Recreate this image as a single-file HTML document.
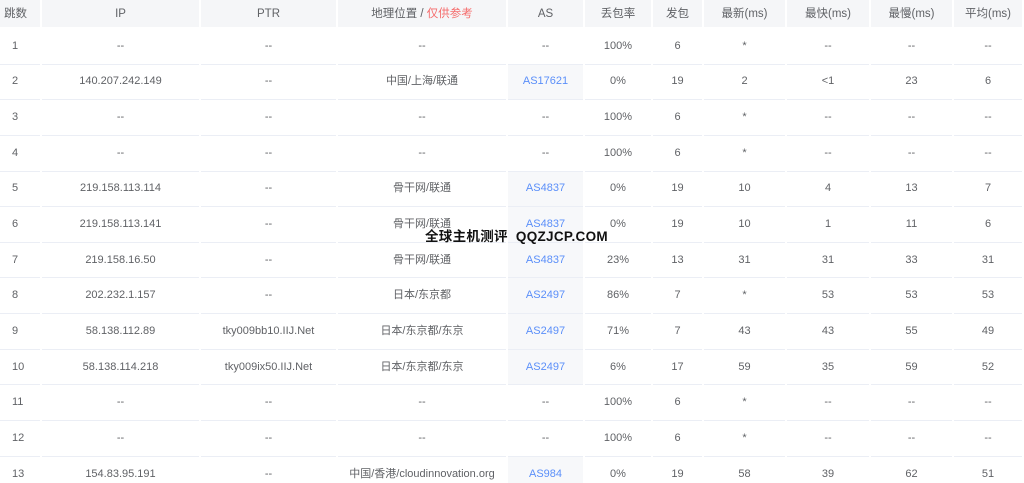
<!DOCTYPE html>
<html><head><meta charset="utf-8"><style>
html,body{margin:0;padding:0;background:#fff;width:1024px;height:483px;overflow:hidden}
body{font-family:"Liberation Sans","Noto Sans CJK SC",sans-serif;font-size:11px;color:#606266;position:relative}
table{border-collapse:separate;border-spacing:2px 0;table-layout:fixed;width:1026px;margin-left:-2px}
th{background:#f5f6f8;height:27px;font-weight:normal;color:#606266;font-size:11.5px;padding:0;border-bottom:2px solid #fff;line-height:14px}
td{height:34.65px;border-bottom:1px solid #ebeef5;text-align:center;padding:0;white-space:nowrap;overflow:hidden;line-height:13px;vertical-align:middle}
td:first-child,th:first-child{text-align:left;padding-left:12px}
th:first-child{padding-left:4px}
td.as{background:#f7f8fa;color:#5b8ff9}
.red{color:#f56c6c}
.wm{position:absolute;left:425px;top:229px;font-weight:bold;font-size:13.5px;color:#111;letter-spacing:0.3px;line-height:16px}
</style></head><body>
<table>
<colgroup><col style="width:40px"><col style="width:157px"><col style="width:135px"><col style="width:168px"><col style="width:75px"><col style="width:66px"><col style="width:49px"><col style="width:81px"><col style="width:82px"><col style="width:81px"><col style="width:68px"></colgroup>
<tr><th>跳数</th><th>IP</th><th>PTR</th><th>地理位置 / <span class="red">仅供参考</span></th><th>AS</th><th>丢包率</th><th>发包</th><th>最新(ms)</th><th>最快(ms)</th><th>最慢(ms)</th><th>平均(ms)</th></tr>
<tr><td>1</td><td>--</td><td>--</td><td>--</td><td>--</td><td>100%</td><td>6</td><td>*</td><td>--</td><td>--</td><td>--</td></tr>
<tr><td>2</td><td>140.207.242.149</td><td>--</td><td>中国/上海/联通</td><td class="as">AS17621</td><td>0%</td><td>19</td><td>2</td><td>&lt;1</td><td>23</td><td>6</td></tr>
<tr><td>3</td><td>--</td><td>--</td><td>--</td><td>--</td><td>100%</td><td>6</td><td>*</td><td>--</td><td>--</td><td>--</td></tr>
<tr><td>4</td><td>--</td><td>--</td><td>--</td><td>--</td><td>100%</td><td>6</td><td>*</td><td>--</td><td>--</td><td>--</td></tr>
<tr><td>5</td><td>219.158.113.114</td><td>--</td><td>骨干网/联通</td><td class="as">AS4837</td><td>0%</td><td>19</td><td>10</td><td>4</td><td>13</td><td>7</td></tr>
<tr><td>6</td><td>219.158.113.141</td><td>--</td><td>骨干网/联通</td><td class="as">AS4837</td><td>0%</td><td>19</td><td>10</td><td>1</td><td>11</td><td>6</td></tr>
<tr><td>7</td><td>219.158.16.50</td><td>--</td><td>骨干网/联通</td><td class="as">AS4837</td><td>23%</td><td>13</td><td>31</td><td>31</td><td>33</td><td>31</td></tr>
<tr><td>8</td><td>202.232.1.157</td><td>--</td><td>日本/东京都</td><td class="as">AS2497</td><td>86%</td><td>7</td><td>*</td><td>53</td><td>53</td><td>53</td></tr>
<tr><td>9</td><td>58.138.112.89</td><td>tky009bb10.IIJ.Net</td><td>日本/东京都/东京</td><td class="as">AS2497</td><td>71%</td><td>7</td><td>43</td><td>43</td><td>55</td><td>49</td></tr>
<tr><td>10</td><td>58.138.114.218</td><td>tky009ix50.IIJ.Net</td><td>日本/东京都/东京</td><td class="as">AS2497</td><td>6%</td><td>17</td><td>59</td><td>35</td><td>59</td><td>52</td></tr>
<tr><td>11</td><td>--</td><td>--</td><td>--</td><td>--</td><td>100%</td><td>6</td><td>*</td><td>--</td><td>--</td><td>--</td></tr>
<tr><td>12</td><td>--</td><td>--</td><td>--</td><td>--</td><td>100%</td><td>6</td><td>*</td><td>--</td><td>--</td><td>--</td></tr>
<tr><td>13</td><td>154.83.95.191</td><td>--</td><td>中国/香港/cloudinnovation.org</td><td class="as">AS984</td><td>0%</td><td>19</td><td>58</td><td>39</td><td>62</td><td>51</td></tr>
</table>
<div class="wm">全球主机测评&nbsp; QQZJCP.COM</div>
</body></html>
